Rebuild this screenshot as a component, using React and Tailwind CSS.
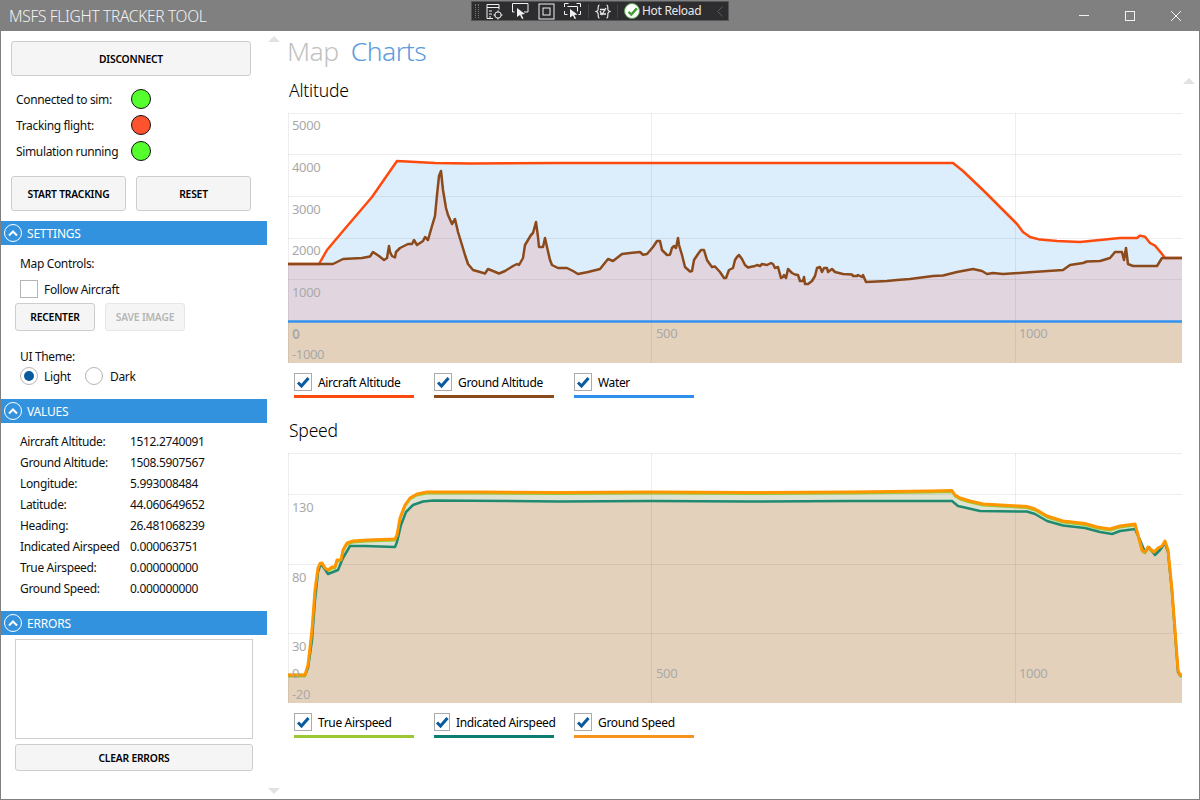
const aircraft = [[288,264],[319,264],[327,250],[343,231],[372,197],[397,161],[435,163],[470,163.5],[560,163],[700,163],[850,163],[953,163],[963,171],[985,192],[990,197],[1010,217],[1017,224],[1023,232],[1030,237],[1040,239.6],[1057,241],[1080,242],[1100,240],[1120,238],[1137,238],[1140,235.6],[1145,236.7],[1150,243],[1155,245.6],[1162,254],[1165,258],[1182,258]];

const ground = [[288,264],[333,264],[343,259],[362,258],[370,256.5],[373,252],[379,256],[384,260],[387,258],[389,246],[390,252],[392,256],[395,257.5],[396,252],[400,248],[408,244],[412,244],[414,240],[417,245],[423,241],[425,237],[428,240],[432,226],[435,216],[437,195],[439,176],[441,171],[443,190],[446,208],[448,215],[452,224],[455,219],[458,232],[462,245],[465,255],[468,264],[473,270],[480,272],[485,273.5],[488,269],[493,271],[499,273.5],[505,271],[513,266],[517,264],[519,265],[523,258],[525,245],[528,240],[531,235],[533,233],[536,222],[538,237],[539,247],[543,247],[545,238],[547,247],[550,260],[552,265],[558,268],[567,268],[573,271],[578,274],[588,272],[600,269],[608,259],[613,261],[622,254],[630,253],[640,252],[643,254.7],[647,254],[653,247],[657,241],[660,241],[662,250],[665,253],[667,255],[670,254.7],[672,248],[674,246],[676,248],[678,238],[679,245],[682,255],[685,267],[690,271.5],[692,271],[694,260],[696,257],[698,254],[701,250],[704,250],[707,260],[709,263],[712,267],[715,266.5],[720,272],[724,278],[726,278],[729,270],[733,268],[735,260],[737,257],[739,255],[742,259],[745,265],[748,267.5],[755,266],[757,265],[760,266],[762,264],[767,265],[771,263],[773,264],[775,268],[778,267],[781,278],[783,277],[784,275],[786,278],[788,269],[792,273],[795,274.5],[798,275],[800,281],[803,281],[804,277],[805,284],[808,284],[812,281],[815,276],[817,268],[820,267],[822,272],[824,268],[827,268],[828,272],[832,269],[835,272],[843,274],[852,274.5],[853,276],[857,276],[858,275],[862,277],[863,275],[866,282],[887,281],[897,280],[910,279],[933,276],[943,275.5],[957,272],[973,269],[982,271],[987,274],[993,273],[1003,274],[1033,272],[1063,270],[1070,265],[1083,263],[1087,261.5],[1100,261],[1110,258],[1115,252],[1122,252],[1124,260],[1126,248],[1128,264],[1133,266],[1157,266],[1162,258],[1165,258],[1182,258]];

const groundSpeed = [[288,675],[305,675],[308,665],[312,630],[315,590],[318,568],[320,563.5],[322,563],[325,568],[328,570],[332,567],[335,567],[337,560],[341,560],[343,550],[347,543],[353,541],[367,540],[395,539],[397,535],[400,518],[405,505],[410,498],[417,494],[427,492],[447,492],[480,492],[560,492.5],[650,492],[750,492.5],[850,492],[930,491],[952,490.5],[955,495],[960,498],[970,501],[983,504],[1027,506.5],[1035,509],[1047,516],[1063,521],[1085,523.5],[1097,527],[1110,529],[1120,526],[1135,524],[1138,535],[1142,550],[1145,552],[1148,547],[1154,552],[1158,548],[1162,546],[1165,541],[1168,550],[1172,590],[1175,630],[1178,670],[1180,675],[1182,675]];

const indicated = [[288,675],[305,675],[308,668],[312,640],[315,600],[318,572],[320,566],[322,565],[328,574],[338,570],[343,558],[350,546],[365,546],[395,547],[397,542],[401,525],[406,512],[413,505],[423,501.5],[433,500.5],[560,501.5],[650,501],[750,501.5],[850,501],[952,501],[958,506],[980,511],[1027,511.5],[1035,514],[1047,521],[1063,525.5],[1085,528],[1100,532],[1112,534],[1120,531],[1135,529],[1140,540],[1145,552],[1149,547],[1155,555],[1160,550],[1165,543],[1168,552],[1172,592],[1175,632],[1178,672],[1180,675],[1182,675]];

const toPoints = (pts) => pts.map((p) => p.join(",")).join(" ");
const toArea = (pts, bottom) =>
  toPoints([[288, bottom], ...pts, [1182, bottom]]);

function AxisLabel({ x, y, children }) {
  return (
    <text x={x} y={y} fontSize="13" fill="#a9a9a9">
      {children}
    </text>
  );
}

function Grid({ rows, top, bottom }) {
  return (
    <g stroke="#000" strokeOpacity="0.065" strokeWidth="1">
      {rows.map((y) => (
        <line key={y} x1="288" x2="1182" y1={y + 0.5} y2={y + 0.5} />
      ))}
      {[288, 651, 1015].map((x) => (
        <line key={x} x1={x + 0.5} x2={x + 0.5} y1={top} y2={bottom} />
      ))}
    </g>
  );
}

function AltitudeChart() {
  return (
    <svg viewBox="288 113 894 250" className="block w-[894px] h-[250px]">
      <polygon points={toArea(aircraft, 363)} fill="#dceefb" />
      <polygon points={toArea(ground, 363)} fill="#e1d5df" />
      <rect x="288" y="321" width="894" height="42" fill="#e3d1bc" />
      <Grid rows={[113, 154, 196, 238, 279]} top={113} bottom={363} />
      <polyline points={toPoints(aircraft)} fill="none" stroke="#ff4a0d" strokeWidth="2.5" strokeLinejoin="round" />
      <polyline points={toPoints(ground)} fill="none" stroke="#8b4a1c" strokeWidth="2.5" strokeLinejoin="round" />
      <line x1="288" x2="1182" y1="321.5" y2="321.5" stroke="#3392ef" strokeWidth="2.5" />
      <AxisLabel x={292} y={130}>5000</AxisLabel>
      <AxisLabel x={292} y={172}>4000</AxisLabel>
      <AxisLabel x={292} y={214}>3000</AxisLabel>
      <AxisLabel x={292} y={255}>2000</AxisLabel>
      <AxisLabel x={292} y={297}>1000</AxisLabel>
      <AxisLabel x={292} y={338}>0</AxisLabel>
      <AxisLabel x={292.5} y={338.5}>0</AxisLabel>
      <AxisLabel x={292} y={359}>-1000</AxisLabel>
      <AxisLabel x={656} y={338}>500</AxisLabel>
      <AxisLabel x={1019} y={338}>1000</AxisLabel>
    </svg>
  );
}

function SpeedChart() {
  return (
    <svg viewBox="288 453 894 250" className="block w-[894px] h-[250px]">
      <polygon points={toArea(groundSpeed, 703)} fill="#dfe3d3" />
      <polygon points={toArea(indicated, 703)} fill="#e3d1bc" />
      <Grid rows={[453, 494, 564, 633]} top={453} bottom={703} />
      <polyline points={toPoints(groundSpeed)} transform="translate(0 1.5)" fill="none" stroke="#9bc832" strokeWidth="2" strokeLinejoin="round" />
      <polyline points={toPoints(indicated)} fill="none" stroke="#1f8a70" strokeWidth="2.5" strokeLinejoin="round" />
      <polyline points={toPoints(groundSpeed)} fill="none" stroke="#ff9600" strokeWidth="3" strokeLinejoin="round" />
      <AxisLabel x={292} y={512}>130</AxisLabel>
      <AxisLabel x={292} y={582}>80</AxisLabel>
      <AxisLabel x={292} y={651}>30</AxisLabel>
      <AxisLabel x={292} y={678}>0</AxisLabel>
      <AxisLabel x={292} y={699}>-20</AxisLabel>
      <AxisLabel x={656} y={678}>500</AxisLabel>
      <AxisLabel x={1019} y={678}>1000</AxisLabel>
    </svg>
  );
}

function CheckMark({ size, color }) {
  return (
    <svg width={size} height={size} viewBox="0 0 14 14" fill="none" stroke={color} strokeWidth="3">
      <path d="M2 7.500l3.500 3.500L12.500 3" />
    </svg>
  );
}

function Legend({ items }) {
  return (
    <div className="flex pl-[6px] pt-[10px] gap-[20px]">
      {items.map((item) => (
        <div key={item.label} className="w-[120px]">
          <div className="flex items-center h-[18px]">
            <span className="flex items-center justify-center w-[18px] h-[18px] border border-[#ababab] bg-white">
              <CheckMark size={14} color="#0a5a9e" />
            </span>
            <span className="ml-[6px] pt-[2px] text-[12px] tracking-[-0.35px] text-black whitespace-nowrap">{item.label}</span>
          </div>
          <div className={`mt-[4px] h-[3px] ${item.color}`}></div>
        </div>
      ))}
    </div>
  );
}

function Button({ className, disabled, children }) {
  return (
    <button
      className={`flex items-center justify-center pt-[2px] rounded-[3px] border bg-[#f5f5f5] text-[10.3px] font-semibold tracking-[-0.2px] ${
        disabled ? "border-[#e6e6e6] text-[#b5b5b5]" : "border-[#cdcdcd] text-black"
      } ${className}`}
    >
      {children}
    </button>
  );
}

function SectionHeader({ children }) {
  return (
    <div className="flex items-center h-[24px] bg-[#3392de] text-white text-[12px] tracking-[-0.2px]">
      <span className="ml-[3px] flex items-center justify-center w-[18px] h-[18px] rounded-full border-[1.5px] border-white">
        <svg width="10" height="7" viewBox="0 0 10 7" fill="none" stroke="#fff" strokeWidth="2">
          <path d="M1 5.500l4-4 4 4" />
        </svg>
      </span>
      <span className="ml-[5px] pt-[2px]">{children}</span>
    </div>
  );
}

function StatusRow({ label, on }) {
  return (
    <div className="flex items-center h-[26px] pl-[15px]">
      <span className="w-[115px] pt-[2px]">{label}</span>
      <span className={`w-[20px] h-[20px] rounded-full border border-[#111] ${on ? "bg-[#55ff2d]" : "bg-[#ff5330]"}`}></span>
    </div>
  );
}

function ValueRow({ label, value }) {
  return (
    <div className="flex items-center h-[21px] pl-[19px]">
      <span className="w-[110px] whitespace-nowrap">{label}</span>
      <span>{value}</span>
    </div>
  );
}

function Radio({ checked }) {
  return (
    <span className="flex items-center justify-center w-[18px] h-[18px] rounded-full border border-[#b5b5b5] bg-white">
      {checked && <span className="w-[10px] h-[10px] rounded-full bg-[#0a5a9e]"></span>}
    </span>
  );
}

function HotReloadBar() {
  return (
    <div className="absolute left-[470px] top-[1px] flex items-center w-[258px] h-[20px] bg-[#2d2d30] border border-[#555] text-[#e8e8e8]">
      <span className="ml-[3px] w-[4px] h-[14px] border-l border-r border-dotted border-[#777]"></span>
      <svg width="17" height="17" viewBox="0 0 17 17" fill="none" stroke="#f0f0f0" className="ml-[7px]">
        <path d="M1 1.500h12v5M1 1.500v14h6M1 4.500h12M3 8h3M3 11h3M3 14h2" />
        <circle cx="12" cy="12" r="3.200" />
        <path d="M12 7.500v2M12 14.500v2M7.500 12h2M14.500 12h2" />
      </svg>
      <svg width="17" height="17" viewBox="0 0 17 17" fill="none" className="ml-[9px]">
        <path d="M.5 9V.5h15.500V9h-4M.5 9h2" stroke="#f0f0f0" />
        <path d="M5 5l8 6-3.500.5 2 4-1.500.5-2-4L5 14z" fill="#f0f0f0" />
      </svg>
      <svg width="17" height="17" viewBox="0 0 17 17" fill="none" stroke="#f0f0f0" className="ml-[9px]">
        <rect x="1" y="1" width="15" height="15" />
        <rect x="5" y="5" width="7" height="7" />
      </svg>
      <svg width="17" height="17" viewBox="0 0 17 17" fill="none" className="ml-[9px]">
        <path d="M.5 4V.500h4M12.500.500h4V4M.5 8v3.500h3M16.500 8v3.500h-2M3.500 3.500h10v5" stroke="#f0f0f0" />
        <path d="M6 6l7.500 5.500-3.200.5 1.800 3.500-1.400.5-1.800-3.500L6 14.500z" fill="#f0f0f0" />
      </svg>
      <span className="ml-[7px] h-[14px] border-l border-[#444]"></span>
      <svg width="16" height="15" viewBox="0 0 16 15" fill="none" stroke="#e8e8e8" strokeWidth="1.200" className="ml-[6px]">
        <path d="M4.500 1C2.500 1 3.500 4 3 6 2.500 7 1 7.500 1 7.500s1.500.5 2 1.500c.5 2-.5 5 1.500 5M11.500 1c2 0 1 3 1.500 5 .5 1 2 1.500 2 1.500s-1.500.5-2 1.500c-.5 2 .5 5-1.500 5" />
        <path d="M5 7l2 3.500L11 4M5 5.500l6 0M5 10l6 0" strokeWidth="1.300" />
      </svg>
      <span className="ml-[6px] h-[14px] border-l border-[#444]"></span>
      <span className="ml-[6px] flex items-center justify-center w-[16px] h-[16px] rounded-full bg-white border border-[#5aa64a]">
        <CheckMark size={11} color="#3f9d32" />
      </span>
      <span className="ml-[2px] text-[12px] tracking-[-0.3px] whitespace-nowrap">Hot Reload</span>
      <svg width="6" height="11" viewBox="0 0 6 11" fill="none" stroke="#5a5a5e" className="ml-[16px]">
        <path d="M5.500.5L.7 5.500l4.800 5" />
      </svg>
    </div>
  );
}

function ScrollArrow({ className, up }) {
  return (
    <span
      className={`absolute w-0 h-0 border-l-[6px] border-r-[6px] border-l-transparent border-r-transparent ${
        up ? "border-b-[6px] border-b-[#e2e2e2]" : "border-t-[6px] border-t-[#e2e2e2]"
      } ${className}`}
    ></span>
  );
}

export default function App() {
  return (
    <div className="relative w-[1200px] h-[800px] overflow-hidden bg-white border-x border-b border-[#808080] font-['Noto_Sans',sans-serif] text-[12px] tracking-[-0.35px] text-[#111]">
      {/* Title bar */}
      <div className="flex items-center justify-between h-[31px] bg-[#808080] text-[#f2f2f2] -mx-px">
        <span className="pl-[9px] pt-[3px] text-[15.500px] font-light tracking-[-0.3px]">MSFS FLIGHT TRACKER TOOL</span>
        <div className="flex items-center pr-[19px] gap-[36px]">
          <span className="w-[10px] h-px bg-[#f2f2f2]"></span>
          <span className="w-[10px] h-[10px] border border-[#f2f2f2]"></span>
          <svg width="10" height="10" viewBox="0 0 10 10" stroke="#f2f2f2">
            <path d="M0 0l10 10M10 0L0 10" />
          </svg>
        </div>
      </div>
      <HotReloadBar />

      <div className="flex h-[768px]">
        {/* Sidebar */}
        <div className="w-[266px] shrink-0 pt-[10px]">
          <Button className="ml-[10px] w-[240px] h-[35px]">DISCONNECT</Button>
          <div className="mt-[10px]">
            <StatusRow label="Connected to sim:" on />
            <StatusRow label="Tracking flight:" />
            <StatusRow label="Simulation running" on />
          </div>
          <div className="flex gap-[10px] ml-[10px] mt-[12px] mb-[10px]">
            <Button className="w-[115px] h-[35px]">START TRACKING</Button>
            <Button className="w-[115px] h-[35px]">RESET</Button>
          </div>

          <SectionHeader>SETTINGS</SectionHeader>
          <div className="h-[154px] pl-[14px]">
            <div className="pl-[5px] pt-[2px] h-[35px] flex items-center">Map Controls:</div>
            <div className="flex items-center pl-[5px] h-[18px]">
              <span className="w-[18px] h-[18px] border border-[#b5b5b5]"></span>
              <span className="ml-[6px] pt-[2px] leading-[16px]">Follow Aircraft</span>
            </div>
            <div className="flex gap-[10px] mt-[5px]">
              <Button className="w-[80px] h-[28px]">RECENTER</Button>
              <Button disabled className="w-[80px] h-[28px]">SAVE IMAGE</Button>
            </div>
            <div className="pl-[5px] pt-[2px] mt-[14px] h-[22px] flex items-center">UI Theme:</div>
            <div className="flex items-center pl-[5px] h-[18px]">
              <Radio checked />
              <span className="ml-[6px] pt-[2px] leading-[16px] w-[41px]">Light</span>
              <Radio />
              <span className="ml-[7px] pt-[2px] leading-[16px]">Dark</span>
            </div>
          </div>

          <SectionHeader>VALUES</SectionHeader>
          <div className="h-[188px] pt-[8px]">
            <ValueRow label="Aircraft Altitude:" value="1512.2740091" />
            <ValueRow label="Ground Altitude:" value="1508.5907567" />
            <ValueRow label="Longitude:" value="5.993008484" />
            <ValueRow label="Latitude:" value="44.060649652" />
            <ValueRow label="Heading:" value="26.481068239" />
            <ValueRow label="Indicated Airspeed" value="0.000063751" />
            <ValueRow label="True Airspeed:" value="0.000000000" />
            <ValueRow label="Ground Speed:" value="0.000000000" />
          </div>

          <SectionHeader>ERRORS</SectionHeader>
          <div className="ml-[14px] mt-[4px] w-[238px] h-[100px] border border-[#cfcfcf]"></div>
          <Button className="ml-[14px] mt-[5px] w-[238px] h-[27px]">CLEAR ERRORS</Button>
        </div>

        {/* Charts */}
        <div className="pl-[21px]">
          <div className="flex items-center h-[43px] pb-[1px] -ml-px text-[26.500px] font-light tracking-[-0.5px] gap-[12px]">
            <span className="text-[#c2c2c2]">Map</span>
            <span className="text-[#5b9bde]">Charts</span>
          </div>
          <div className="h-[39px] pl-px pb-[6px] flex items-center text-[17.500px] font-light tracking-[-0.2px] text-black">Altitude</div>
          <AltitudeChart />
          <Legend
            items={[
              { label: "Aircraft Altitude", color: "bg-[#ff4a0d]" },
              { label: "Ground Altitude", color: "bg-[#8b4a1c]" },
              { label: "Water", color: "bg-[#2f8fef]" },
            ]}
          />
          <div className="h-[55px] pl-px pt-[19px] text-[17.500px] font-light tracking-[-0.2px] text-black">Speed</div>
          <SpeedChart />
          <Legend
            items={[
              { label: "True Airspeed", color: "bg-[#9bc832]" },
              { label: "Indicated Airspeed", color: "bg-[#0b7d73]" },
              { label: "Ground Speed", color: "bg-[#f7941d]" },
            ]}
          />
        </div>
      </div>

      <ScrollArrow up className="left-[267px] top-[36px]" />
      <ScrollArrow className="left-[267px] top-[788px]" />
      <ScrollArrow up className="left-[1182px] top-[78px]" />
    </div>
  );
}
